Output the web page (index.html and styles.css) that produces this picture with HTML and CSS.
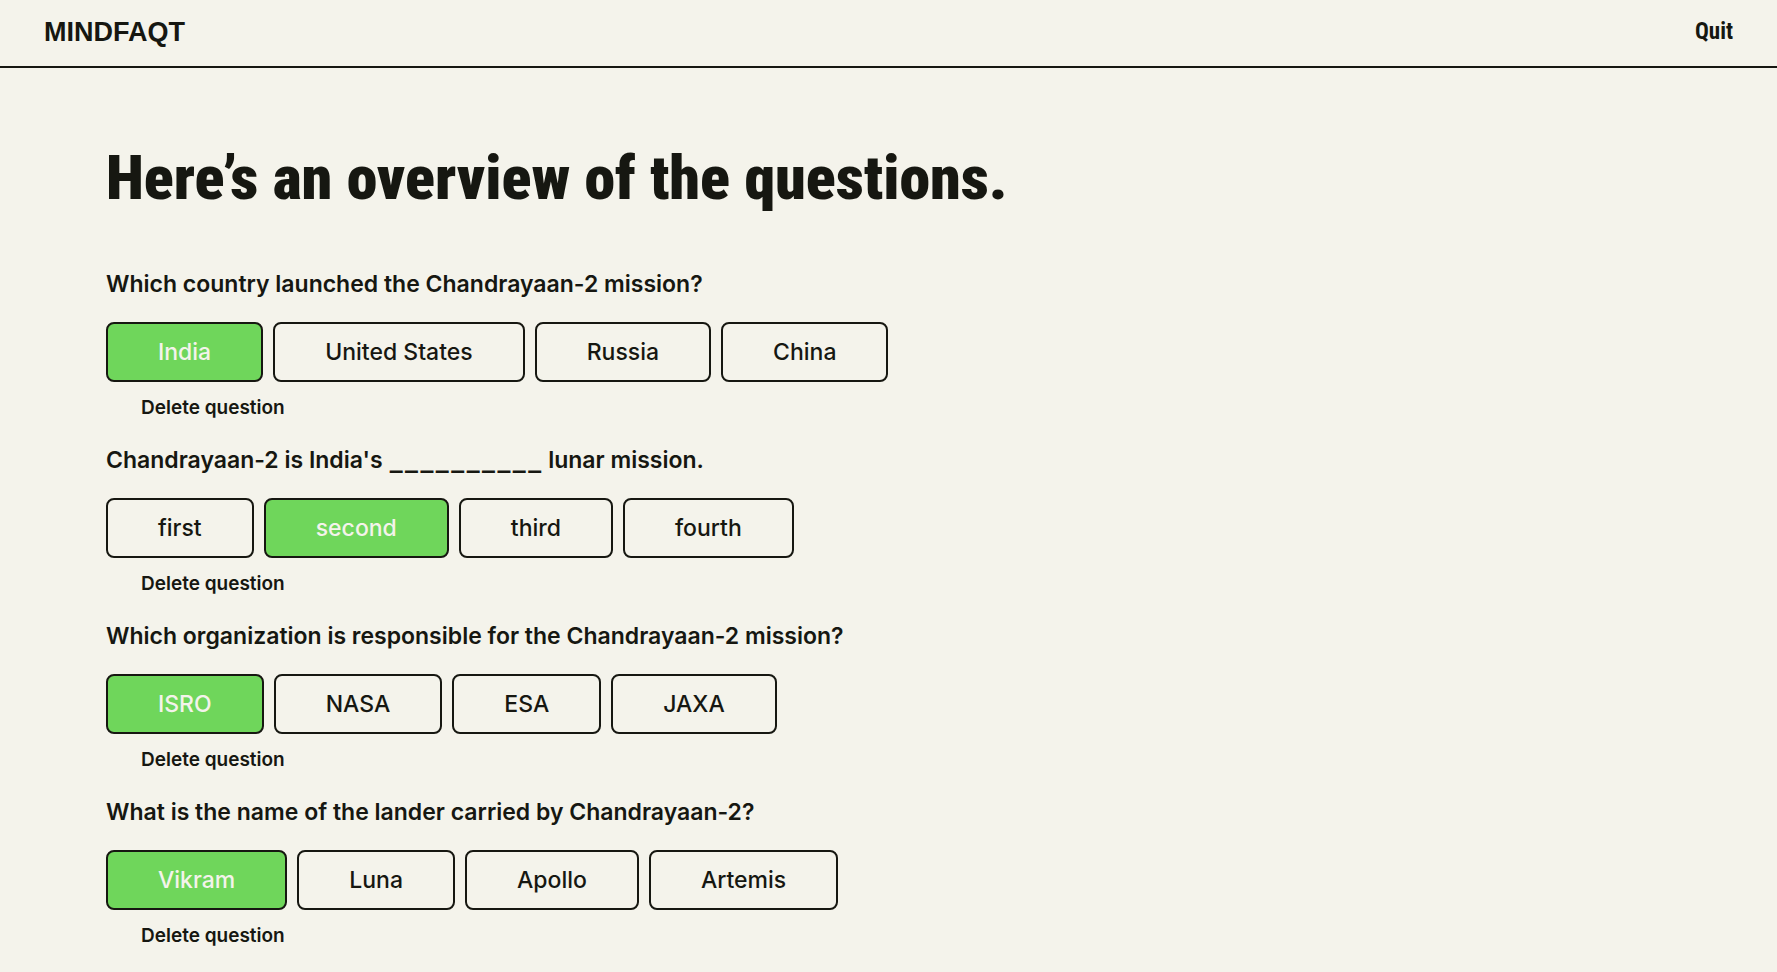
FILE: index.html
```html
<!DOCTYPE html>
<html lang="en">
<head>
<meta charset="utf-8">
<meta name="viewport" content="width=device-width, initial-scale=1">
<title>MINDFAQT</title>
<link rel="stylesheet" href="styles.css">
</head>
<body>
<header class="topbar">
  <a class="logo" href="#">MINDFAQT</a>
  <button class="quit" type="button">Quit</button>
</header>
<main class="overview">
  <h1 class="title">Here’s an overview of the questions.</h1>
  <section class="question">
    <h2 class="prompt">Which country launched the Chandrayaan-2 mission?</h2>
    <div class="options">
      <button class="option correct" type="button">India</button>
      <button class="option" type="button">United States</button>
      <button class="option" type="button">Russia</button>
      <button class="option" type="button">China</button>
    </div>
    <button class="delete" type="button">Delete question</button>
  </section>
  <section class="question">
    <h2 class="prompt">Chandrayaan-2 is India's <span class="blank">__________</span> lunar mission.</h2>
    <div class="options">
      <button class="option" type="button">first</button>
      <button class="option correct" type="button">second</button>
      <button class="option" type="button">third</button>
      <button class="option" type="button">fourth</button>
    </div>
    <button class="delete" type="button">Delete question</button>
  </section>
  <section class="question">
    <h2 class="prompt">Which organization is responsible for the Chandrayaan-2 mission?</h2>
    <div class="options">
      <button class="option correct" type="button">ISRO</button>
      <button class="option" type="button">NASA</button>
      <button class="option" type="button">ESA</button>
      <button class="option" type="button">JAXA</button>
    </div>
    <button class="delete" type="button">Delete question</button>
  </section>
  <section class="question">
    <h2 class="prompt">What is the name of the lander carried by Chandrayaan-2?</h2>
    <div class="options">
      <button class="option correct" type="button">Vikram</button>
      <button class="option" type="button">Luna</button>
      <button class="option" type="button">Apollo</button>
      <button class="option" type="button">Artemis</button>
    </div>
    <button class="delete" type="button">Delete question</button>
  </section>
</main>
</body>
</html>
```
FILE: styles.css
```css
:root {
  --paper: #f4f3eb;
  --ink: #161711;
  --green: #6fd65b;
}

* {
  box-sizing: border-box;
}

body {
  margin: 0;
  background: var(--paper);
  color: var(--ink);
  font-family: Inter, "Liberation Sans", sans-serif;
}

button {
  margin: 0;
  border: 0;
  background: none;
  color: inherit;
  font-family: inherit;
  cursor: pointer;
}

.topbar {
  display: flex;
  align-items: center;
  justify-content: space-between;
  padding: 16px 44px 18px;
  border-bottom: 2px solid var(--ink);
}

.logo {
  color: inherit;
  font: 700 27px/32px "Liberation Sans", Arial, sans-serif;
  text-decoration: none;
}

.quit {
  padding: 0;
  font: 700 23px/32px "Roboto Condensed", Roboto, sans-serif;
}

.overview {
  padding: 74px 106px 0;
}

.title {
  margin: 0 0 54px;
  font: 900 62px/72px "Roboto Condensed", Roboto, sans-serif;
}

.question {
  margin-bottom: 24px;
}

.prompt {
  margin: 0 0 22px;
  font-size: 23px;
  font-weight: 600;
  line-height: 32px;
}

.blank {
  font-family: Lato, sans-serif;
  font-size: 33px;
  font-weight: 700;
  line-height: 0;
}

.options {
  display: flex;
  flex-wrap: wrap;
  gap: 10px;
}

.option {
  padding: 12px 50px;
  border: 2px solid var(--ink);
  border-radius: 8px;
  font-size: 23px;
  font-weight: 550;
  line-height: 32px;
}

.correct {
  background: var(--green);
  color: var(--paper);
}

.delete {
  display: block;
  margin-top: 14px;
  padding: 0 35px;
  font-size: 19px;
  font-weight: 600;
  line-height: 24px;
}
```
